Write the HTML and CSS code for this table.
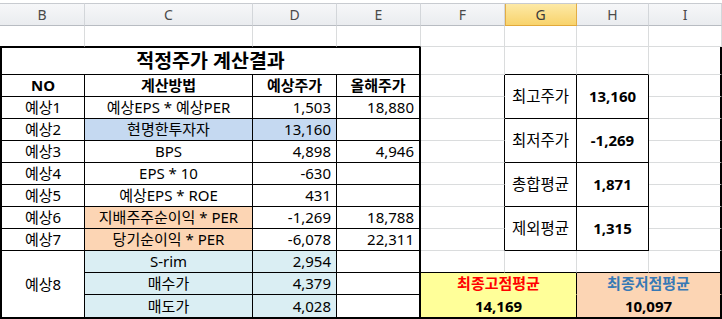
FILE: index.html
```html
<!DOCTYPE html>
<html lang="ko">
<head>
<meta charset="utf-8">
<title>적정주가 계산결과</title>
<link rel="stylesheet" href="styles.css">
</head>
<body>
<div class="sheet">
  <!-- column headers -->
  <div class="ch">B</div><div class="ch">C</div><div class="ch">D</div><div class="ch">E</div>
  <div class="ch">F</div><div class="ch sel">G</div><div class="ch">H</div><div class="ch">I</div>

  <!-- row 1 -->
  <div class="c bt"></div><div class="c bt"></div><div class="c bt"></div><div class="c bt"></div>
  <div class="c"></div><div class="c"></div><div class="c"></div><div class="c"></div>

  <!-- row 2 -->
  <div class="c t tl tr title">적정주가 계산결과</div>
  <div class="c"></div><div class="c bt"></div><div class="c bt"></div><div class="c edge"></div>

  <!-- row 3 -->
  <div class="c t tl b">NO</div>
  <div class="c t b">계산방법</div>
  <div class="c t b">예상주가</div>
  <div class="c t tr b">올해주가</div>
  <div class="c bl"></div>
  <div class="c bx rs2 lbl">최고주가</div>
  <div class="c bx rs2 b">13,160</div>
  <div class="c edge"></div>

  <!-- row 4 -->
  <div class="c t tl">예상1</div>
  <div class="c t">예상EPS * 예상PER</div>
  <div class="c t num">1,503</div>
  <div class="c t tr num">18,880</div>
  <div class="c bl"></div>
  <div class="c edge"></div>

  <!-- row 5 -->
  <div class="c t tl">예상2</div>
  <div class="c t blue">현명한투자자</div>
  <div class="c t num blue">13,160</div>
  <div class="c t tr"></div>
  <div class="c bl"></div>
  <div class="c bx rs2 lbl">최저주가</div>
  <div class="c bx rs2 b">-1,269</div>
  <div class="c edge"></div>

  <!-- row 6 -->
  <div class="c t tl">예상3</div>
  <div class="c t">BPS</div>
  <div class="c t num">4,898</div>
  <div class="c t tr num">4,946</div>
  <div class="c bl"></div>
  <div class="c edge"></div>

  <!-- row 7 -->
  <div class="c t tl">예상4</div>
  <div class="c t">EPS * 10</div>
  <div class="c t num">-630</div>
  <div class="c t tr"></div>
  <div class="c bl"></div>
  <div class="c bx rs2 lbl">총합평균</div>
  <div class="c bx rs2 b">1,871</div>
  <div class="c edge"></div>

  <!-- row 8 -->
  <div class="c t tl">예상5</div>
  <div class="c t">예상EPS * ROE</div>
  <div class="c t num">431</div>
  <div class="c t tr"></div>
  <div class="c bl"></div>
  <div class="c edge"></div>

  <!-- row 9 -->
  <div class="c t tl">예상6</div>
  <div class="c t peach">지배주주순이익 * PER</div>
  <div class="c t num">-1,269</div>
  <div class="c t tr num">18,788</div>
  <div class="c bl"></div>
  <div class="c bx rs2 lbl">제외평균</div>
  <div class="c bx rs2 b">1,315</div>
  <div class="c edge"></div>

  <!-- row 10 -->
  <div class="c t tl">예상7</div>
  <div class="c t peach">당기순이익 * PER</div>
  <div class="c t num">-6,078</div>
  <div class="c t tr num">22,311</div>
  <div class="c bl"></div>
  <div class="c edge"></div>

  <!-- row 11 -->
  <div class="c t tl tb rs3">예상8</div>
  <div class="c t aqua">S-rim</div>
  <div class="c t num aqua">2,954</div>
  <div class="c t tr"></div>
  <div class="c bt"></div><div class="c bt"></div><div class="c bt"></div><div class="c bt edge"></div>

  <!-- row 12 -->
  <div class="c t aqua">매수가</div>
  <div class="c t num aqua">4,379</div>
  <div class="c t tr"></div>
  <div class="c cs2 yellow nb sep b red">최종고점평균</div>
  <div class="c cs2 peach nb edge b bluetxt">최종저점평균</div>

  <!-- row 13 -->
  <div class="c t tb aqua">매도가</div>
  <div class="c t tb num aqua">4,028</div>
  <div class="c t tr tb"></div>
  <div class="c cs2 yellow tb sep b">14,169</div>
  <div class="c cs2 peach tb edge b">10,097</div>
</div>
</body>
</html>
```
FILE: styles.css
```css
* { box-sizing: border-box; }

html, body {
  margin: 0;
  padding: 0;
  background: #ffffff;
}

body {
  font-family: "Noto Sans", "Noto Sans CJK KR", sans-serif;
  font-size: 15px;
  color: #000000;
}

.sheet {
  display: grid;
  grid-template-columns: 85px 168px 84px 84px 84px 72px 72px 73px;
  grid-template-rows: 23px 21px 28px repeat(10, 22px) 24px;
  width: 722px;
  padding-top: 3px;
}

/* column header */
.ch {
  display: flex;
  align-items: center;
  justify-content: center;
  background: linear-gradient(#f6f7f9, #eaecef);
  border-top: 1px solid #c8cbd0;
  border-bottom: 1px solid #b8bcc2;
  border-right: 1px solid #d3d6da;
  color: #4a4a4a;
  font-size: 14px;
  line-height: 1;
}
.ch.sel {
  background: linear-gradient(#fde9a6, #f8d36c);
  border-right-color: #e2ad45;
  border-bottom-color: #e2a93a;
  box-shadow: inset 1px 0 #e2ad45;
  color: #3a3a3a;
}

/* cells */
.c {
  display: flex;
  align-items: center;
  justify-content: center;
  border-right: 1px solid #dadcdd;
  border-bottom: 1px solid #dadcdd;
  white-space: nowrap;
  overflow: hidden;
  line-height: 1;
}

.t { border-right-color: #000; border-bottom-color: #000; }
.tl { border-left: 2px solid #000; }
.tr { border-right: 2px solid #000; }
.tb { border-bottom: 2px solid #000; }
.bt { border-bottom-color: #000; }
.bl { border-right-color: #000; }
.bx { border-right-color: #000; border-bottom-color: #000; }
.edge { border-right: 2px solid #000; }
.nb { border-bottom-color: transparent; }
.sep { border-right-color: #000; }

.title {
  grid-column: span 4;
  border-top: 1px solid #000;
  font-size: 19.5px;
  font-weight: 700;
}

.rs2 { grid-row: span 2; }
.rs3 { grid-row: span 3; }
.cs2 { grid-column: span 2; }

.num { justify-content: flex-end; padding-right: 5px; }
.b { font-weight: 700; }
.lbl { font-size: 15.5px; }

.blue { background: #c5d9f1; }
.peach { background: #fcd5b4; }
.aqua { background: #daeef3; }
.yellow { background: #ffff99; }

.red { color: #ff0000; }
.bluetxt { color: #3779b5; }
```
